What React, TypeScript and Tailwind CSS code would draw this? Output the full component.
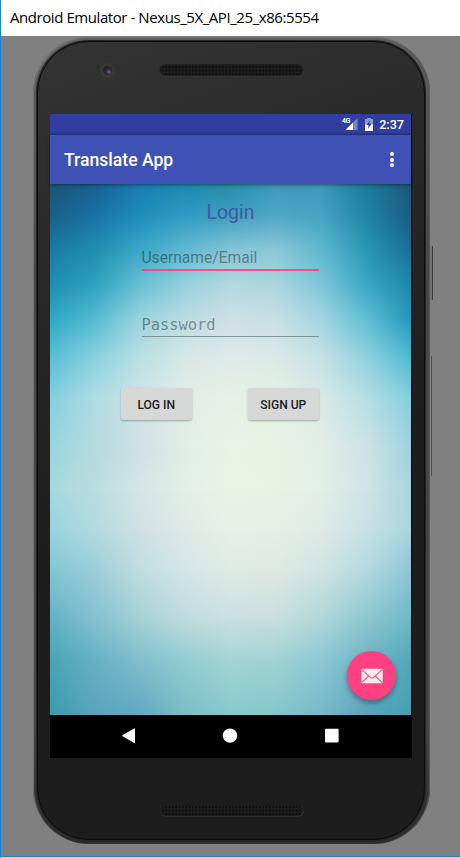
const W = 361;
const H = 531;

// Backdrop colours: one entry per row, [y, colours from left to right].
const MESH: [number, string[]][] = [
  [0, ["#1b5578", "#1a5f90", "#1a7cb5", "#1e88b0", "#268fa6", "#3e96bc", "#3f98bb", "#1f7a9a", "#1a5a78"]],
  [31, ["#1a5f88", "#1a72a5", "#1f8dbb", "#2f9cc4", "#3f9fc0", "#4fa7c6", "#45a3c0", "#1f86a5", "#1a5d84"]],
  [66, ["#1a7aa0", "#2090b0", "#3aa8c8", "#62b8d0", "#84c4d4", "#8cc7d6", "#60b8cf", "#2a98b8", "#1a6f98"]],
  [101, ["#1f90b0", "#2fa2c0", "#68c0d4", "#98d0dc", "#b4d8e0", "#acd5de", "#80c6da", "#3aa8c4", "#1f88aa"]],
  [136, ["#2fa8c4", "#56bcd2", "#9cd4de", "#bcdce2", "#cfdfe6", "#c9dfe5", "#a4d5e0", "#62c0d4", "#2498bc"]],
  [176, ["#5cc0d6", "#8cd2e0", "#bce0e4", "#d8e8e6", "#dfebe8", "#dceae6", "#c8e1e6", "#94d2de", "#50bcd4"]],
  [216, ["#86cede", "#b0dce4", "#d0e4e4", "#e2ede8", "#e6f0e4", "#e5f0e5", "#d9eae6", "#b8dfe4", "#84d0de"]],
  [266, ["#98d6dc", "#b6dade", "#d0e0e4", "#e0eee6", "#e9f4e5", "#e8f3e3", "#e1eee6", "#cfe2e6", "#a0d2de"]],
  [306, ["#a4d8de", "#bcdde0", "#d4e6e4", "#e2efe6", "#e9f4e5", "#e8f3e3", "#e2efe6", "#cfe4e6", "#a8d6de"]],
  [346, ["#98d2dc", "#b2dae0", "#d0e0e2", "#dfe9e6", "#e6f0e6", "#e4efe4", "#deeae6", "#c8e0e6", "#a8d6dc"]],
  [386, ["#82c6d4", "#9ccdd6", "#c0dde0", "#d4e5e6", "#deebe4", "#dde9e2", "#d0e4e2", "#b4d9e0", "#8ec6d4"]],
  [436, ["#62b0c4", "#84bfd0", "#a4d0d4", "#bedbdf", "#cadfe0", "#c8dedc", "#b0d6da", "#8cc6ce", "#6cb8c8"]],
  [476, ["#4aa4b4", "#66b0c4", "#80bfcc", "#92ccd0", "#a4d4d4", "#a0d2d4", "#8cc8d2", "#70b4c8", "#52a8b8"]],
  [531, ["#3c9aac", "#5aa4bc", "#62a6c2", "#7abec4", "#86c8cc", "#84c6ca", "#76b8c8", "#5ca4bc", "#42a0b0"]],
];

function Backdrop() {
  return (
    <svg className="absolute inset-0" width={W} height={H} viewBox={`0 0 ${W} ${H}`} aria-hidden="true">
      <defs>
        {MESH.map(([y, colors], i) => {
          const prev = i ? MESH[i - 1][0] : -1;
          return (
            <g key={y}>
              <linearGradient id={`row${i}`}>
                {colors.map((c, j) => (
                  <stop key={j} offset={j / (colors.length - 1)} stopColor={c} />
                ))}
              </linearGradient>
              <linearGradient id={`fade${i}`} gradientUnits="userSpaceOnUse" x1="0" x2="0" y1={prev} y2={y}>
                <stop offset="0" stopColor="#fff" stopOpacity="0" />
                <stop offset="1" stopColor="#fff" />
              </linearGradient>
              <mask id={`mask${i}`} maskUnits="userSpaceOnUse" x="0" y="0" width={W} height={H}>
                <rect width={W} height={H} fill={`url(#fade${i})`} />
              </mask>
            </g>
          );
        })}
      </defs>
      {MESH.map(([y], i) => (
        <rect key={y} width={W} height={H} fill={`url(#row${i})`} mask={`url(#mask${i})`} />
      ))}
    </svg>
  );
}

function Speaker() {
  return (
    <svg width="146" height="13" viewBox="0 0 146 13" aria-hidden="true">
      <defs>
        <pattern id="holes" width="3.35" height="3.6" patternUnits="userSpaceOnUse" x="2" y="1.2">
          <circle cx="1.7" cy="1.8" r="0.9" fill="#080808" />
        </pattern>
      </defs>
      <rect x="1" y="1" width="144" height="11.6" rx="5.8" fill="#3a3a3a" />
      <rect x="0.5" y="0.2" width="144" height="11.8" rx="5.9" fill="#1d1d1d" />
      <rect x="3" y="1.2" width="139" height="10" rx="4" fill="url(#holes)" />
    </svg>
  );
}

function StatusBar() {
  return (
    <div className="flex h-[21px] items-center justify-end bg-[#303f9f] pr-[7px] shadow-[inset_0_-2px_2px_-1px_rgba(0,0,0,0.25)]">
      <svg width="38" height="21" viewBox="0 0 38 21" aria-hidden="true">
        <path d="M16.5 4v12H4.5z" fill="#7983c2" />
        <path d="M12 8.5V16H4.5z" fill="#fff" />
        <text x="1" y="9.4" fontSize="7.2" fontWeight="700" fill="#fff" stroke="#303f9f" strokeWidth="1" paintOrder="stroke" className="font-['Roboto',sans-serif]" textLength="8.4">4G</text>
        <path d="M24 5h2V4h4v1h2v6h-8z" fill="#8f98cd" />
        <path d="M24 10.5h8V17h-8z" fill="#fff" />
        <path d="M28.6 6.3v3.5h1.7l-2.9 5v-3.7h-1.7z" fill="#303f9f" />
      </svg>
      <span className="text-[12.6px] font-medium leading-[21px] text-white">2:37</span>
    </div>
  );
}

function RaisedButton({ label }: { label: string }) {
  return (
    <button className="h-8 w-[70.5px] rounded-[2px] bg-[#d6d7d7] pt-px text-[12.1px] font-medium leading-8 text-[#1c1f1f] shadow-[0_1px_2px_rgba(0,0,0,0.3)]">
      {label}
    </button>
  );
}

export default function App() {
  return (
    <div className="flex h-[858px] w-[460px] flex-col overflow-hidden border-l border-[#1883d7] bg-[#808080] font-['Roboto',sans-serif]">
      <header className="h-9 shrink-0 bg-white pl-[9px] font-['Open_Sans',sans-serif] text-[15px] leading-[35px] whitespace-nowrap text-black">
        <span className="tracking-[-0.43px]">Android Emulator - Nexus_5X_API_25_x86:5554</span>
      </header>
      <main className="relative h-[820px] shrink-0 pt-[1px] pl-[32px]">
        <div className="absolute top-[210px] left-[428px] h-[54px] w-[4px] border-r border-[#3c3a3b] bg-[#757374]" />
        <div className="absolute top-[320px] left-[428px] h-[120px] w-[3px] border-r border-[#504c4e] bg-[#858283]" />
        <div className="relative h-[806.5px] w-[396.5px] rounded-[56px] bg-[linear-gradient(180deg,#5c5c5c,#484647_30%,#444343_85%,#2a2a2a)] p-[3px] pr-[4px] shadow-[inset_1px_1px_1px_#777,inset_-1px_0_1px_#5c5a5a]">
          <div className="h-full rounded-[53px] bg-[#262626] p-[1px]">
            <div className="flex h-full flex-col items-center rounded-[52px] border border-[#0b0b0b] bg-[#1e1e1e] bg-[linear-gradient(160deg,#343434,#292929_24%,#1d1d1d_55%)]">
              <div className="relative flex h-[72px] w-full shrink-0 justify-center pt-[22px] pl-[2px]">
                <div className="absolute top-[21px] left-[62px] flex h-[15px] w-[15px] items-center justify-center rounded-full bg-[#3a3939]">
                  <div className="h-[9px] w-[9px] rounded-full bg-[radial-gradient(circle_at_65%_65%,#80606c,#2b2937_35%,#15151c)]" />
                </div>
                <Speaker />
              </div>
              <div className="ml-[12px] w-[362px] shrink-0 self-start bg-black">
                <div className="w-[361px]">
                  <StatusBar />
                  <div className="relative z-10 flex h-[49px] items-center justify-between bg-[#3f51b5] pr-[17.5px] pl-[14px] shadow-[0_1px_3px_rgba(0,0,0,0.45)]">
                    <h1 className="pt-[2px] text-[17.6px] font-medium text-white">Translate App</h1>
                    <div className="flex flex-col gap-[1.5px]">
                      <i className="h-[4px] w-[4px] rounded-full bg-white" />
                      <i className="h-[4px] w-[4px] rounded-full bg-white" />
                      <i className="h-[4px] w-[4px] rounded-full bg-white" />
                    </div>
                  </div>
                  <section className="relative flex h-[531px] flex-col overflow-hidden">
                    <Backdrop />
                    <div className="relative flex flex-col">
                      <h2 className="mt-[15px] text-center text-[19.4px] leading-[28px] text-[#4057a8]">Login</h2>
                      <div className="mt-[19px] ml-[91.5px] h-[25px] w-[177.5px] border-b-2 border-[#ff4081]/90 text-[15.6px] leading-[25px] text-black/40">
                        Username/Email
                      </div>
                      <div className="mt-[42px] ml-[91.5px] h-[24px] w-[177.5px] border-b border-[#7d9294] font-['DejaVu_Sans_Mono',monospace] text-[15.4px] leading-[24px] text-black/40">
                        Password
                      </div>
                      <div className="mt-[51px] ml-[71px] flex w-[197.5px] justify-between">
                        <RaisedButton label="LOG IN" />
                        <RaisedButton label="SIGN UP" />
                      </div>
                    </div>
                    <button className="absolute top-[467px] left-[297.3px] flex h-[49px] w-[49px] items-center justify-center rounded-full bg-[#ff4081] shadow-[0_3px_5px_rgba(0,0,0,0.35)]">
                      <svg width="22" height="16" viewBox="0 0 22 16" aria-hidden="true">
                        <rect x="0.3" y="0.7" width="21.4" height="14.6" rx="1" fill="#ececec" />
                        <path d="M0.5 1.4 9.4 9.4q1.6 1.2 3.2 0L21.5 1.4M0.7 14.6 7.8 8M21.3 14.6 14.2 8" fill="none" stroke="#f2568c" strokeWidth="1.2" />
                      </svg>
                    </button>
                  </section>
                </div>
                <nav className="flex h-[42.5px] w-[362px] items-center bg-black pl-[71px]">
                  <svg width="222" height="16" viewBox="0 0 222 16" fill="#fff" aria-hidden="true">
                    <path d="M14 0.9v13.6q0 .8-.8.4L1.6 8.3q-.9-.6 0-1.2L13.2.5q.8-.4.8.4z" />
                    <circle cx="109" cy="7.6" r="7.2" />
                    <rect x="204" y="0.8" width="13.6" height="13.6" rx="0.8" />
                  </svg>
                </nav>
              </div>
              <div className="pt-[46.5px] pl-[2px]">
                <Speaker />
              </div>
            </div>
          </div>
        </div>
      </main>
      <div className="h-px shrink-0 bg-[#1883d7]" />
      <div className="h-px shrink-0 bg-[#d0d8dc]" />
    </div>
  );
}
